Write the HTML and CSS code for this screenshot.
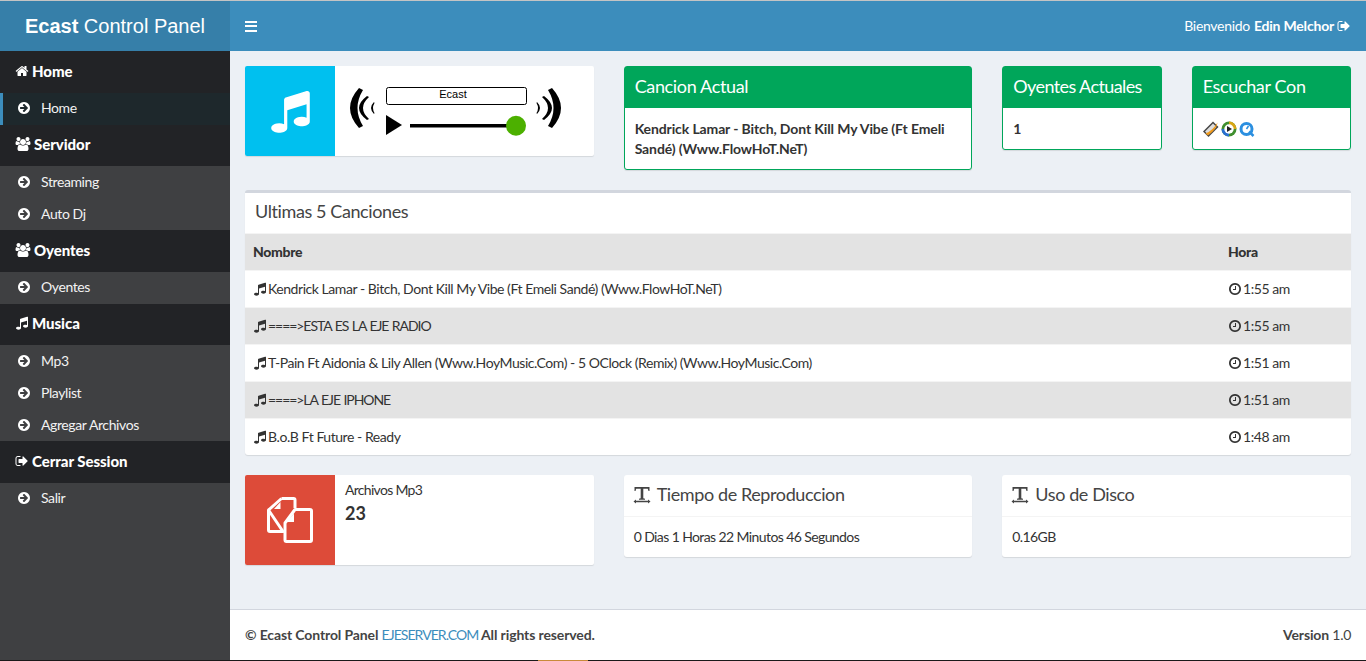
FILE: index.html
```html
<!DOCTYPE html>
<html lang="es">
<head>
    <meta charset="UTF-8">
    <meta name="viewport" content="width=device-width, initial-scale=1.0">
    <title>Ecast Control Panel</title>
    <link rel="stylesheet" href="styles.css">
</head>
<body>
    <!-- iconos -->
    <svg class="sprite" xmlns="http://www.w3.org/2000/svg">
        <symbol id="i-music" viewBox="0 0 1792 1792"><path d="M1664 176v1120q0 50-34 89t-86 60.5-103.5 32-96.5 10.5-96.5-10.5-103.5-32-86-60.5-34-89 34-89 86-60.5 103.5-32 96.5-10.5q105 0 192 39v-537l-768 237v709q0 50-34 89t-86 60.5-103.5 32-96.5 10.5-96.5-10.5-103.5-32-86-60.5-34-89 34-89 86-60.5 103.5-32 96.5-10.5q105 0 192 39v-967q0-31 19-56.5t49-35.5l832-256q12-4 28-4 40 0 68 28t28 68z"/></symbol>
        <symbol id="i-arrow" viewBox="0 0 1792 1792"><path d="M1285 896q0-27-18-45l-91-91-362-362q-18-18-45-18t-45 18l-91 91q-18 18-18 45t18 45l189 189h-502q-26 0-45 19t-19 45v128q0 26 19 45t45 19h502l-189 189q-19 19-19 45t19 45l91 91q18 18 45 18t45-18l362-362 91-91q18-18 18-45zm251 0q0 209-103 385.5t-279.5 279.5-385.5 103-385.5-103-279.5-279.5-103-385.5 103-385.5 279.5-279.5 385.5-103 385.5 103 279.5 279.5 103 385.5z"/></symbol>
        <symbol id="i-signout" viewBox="0 0 1792 1792"><path d="M704 1440q0 4 1 20t.5 26.5-3 23.5-10 19.5-20.5 6.5h-320q-119 0-203.5-84.5t-84.5-203.5v-704q0-119 84.5-203.5t203.5-84.5h320q13 0 22.5 9.5t9.5 22.5q0 4 1 20t.5 26.5-3 23.5-10 19.5-20.5 6.5h-320q-66 0-113 47t-47 113v704q0 66 47 113t113 47h312l11.5 1 11.5 3 8 5.5 7 9 2 13.5zm928-544q0 26-19 45l-544 544q-19 19-45 19t-45-19-19-45v-288h-448q-26 0-45-19t-19-45v-384q0-26 19-45t45-19h448v-288q0-26 19-45t45-19 45 19l544 544q19 19 19 45z"/></symbol>
        <symbol id="i-home" viewBox="0 0 1792 1792"><path d="M1472 992v480q0 26-19 45t-45 19h-384v-384h-256v384h-384q-26 0-45-19t-19-45v-480q0-1 .5-3t.5-3l575-474 575 474q1 2 1 6zm223-69l-62 74q-8 9-21 11h-3q-13 0-21-7l-692-577-692 577q-12 8-24 7-13-2-21-11l-62-74q-8-10-7-23.5t11-21.5l719-599q32-26 76-26t76 26l244 204v-195q0-14 9-23t23-9h192q14 0 23 9t9 23v408l219 182q10 8 11 21.5t-7 23.5z"/></symbol>
        <symbol id="i-users" viewBox="0 0 1920 1792"><path d="M593 896q-162 5-265 128h-134q-82 0-138-40.5t-56-118.5q0-353 124-353 6 0 43.5 21t97.5 42.5 119 21.5q67 0 133-23-5 37-5 66 0 139 81 256zm1071 637q0 120-73 189.5t-194 69.5h-874q-121 0-194-69.5t-73-189.5q0-53 3.5-103.5t14-109 26.5-108.5 43-97.5 62-81 85.5-53.5 111.5-20q10 0 43 21.5t73 48 107 48 135 21.5 135-21.5 107-48 73-48 43-21.5q61 0 111.5 20t85.5 53.5 62 81 43 97.5 26.5 108.5 14 109 3.5 103.5zm-1024-1277q0 106-75 181t-181 75-181-75-75-181 75-181 181-75 181 75 75 181zm704 384q0 159-112.5 271.5t-271.5 112.5-271.5-112.5-112.5-271.5 112.5-271.5 271.5-112.5 271.5 112.5 112.5 271.5zm576 225q0 78-56 118.5t-138 40.5h-134q-103-123-265-128 81-117 81-256 0-29-5-66 66 23 133 23 59 0 119-21.5t97.5-42.5 43.5-21q124 0 124 353zm-128-609q0 106-75 181t-181 75-181-75-75-181 75-181 181-75 181 75 75 181z"/></symbol>
        <symbol id="i-clock" viewBox="0 0 1792 1792"><path d="M1024 544v448q0 14-9 23t-23 9h-320q-14 0-23-9t-9-23v-64q0-14 9-23t23-9h224v-352q0-14 9-23t23-9h64q14 0 23 9t9 23zm416 352q0-148-73-273t-198-198-273-73-273 73-198 198-73 273 73 273 198 198 273 73 273-73 198-198 73-273zm224 0q0 209-103 385.5t-279.5 279.5-385.5 103-385.5-103-279.5-279.5-103-385.5 103-385.5 279.5-279.5 385.5-103 385.5 103 279.5 279.5 103 385.5z"/></symbol>
        <symbol id="i-textwidth" viewBox="0 0 18 18"><path d="M1.500 1h15v4h-1l-.7-2.300H10.300V12.200l1.700.6v.9H6v-.9l1.700-.6V2.700H3.200L2.500 5h-1zM.5 15.500l2.500-1.900v1.200h12v-1.200l2.500 1.900L15 17.400v-1.200H3v1.200z"/></symbol>
        <symbol id="i-waves" viewBox="0 0 26 44"><path d="M9 2Q-9 22 9 42L13 40Q2 22 13 4zM17 10Q1 22 17 34L19 33Q7 22 19 11zM24 16Q18 22 24 28L24.500 27Q21.500 22 24.500 17z"/></symbol>
    </svg>

    <div class="layout">
        <aside class="sidebar">
            <div class="logo"><b>Ecast</b> Control Panel</div>
            <nav>
                <div class="nav-title"><svg class="ico"><use href="#i-home"/></svg>Home</div>
                <a class="nav-item active"><svg class="ico-arrow"><use href="#i-arrow"/></svg>Home</a>
                <div class="nav-title"><svg class="ico ico-wide"><use href="#i-users"/></svg>Servidor</div>
                <a class="nav-item"><svg class="ico-arrow"><use href="#i-arrow"/></svg>Streaming</a>
                <a class="nav-item"><svg class="ico-arrow"><use href="#i-arrow"/></svg>Auto Dj</a>
                <div class="nav-title"><svg class="ico ico-wide"><use href="#i-users"/></svg>Oyentes</div>
                <a class="nav-item"><svg class="ico-arrow"><use href="#i-arrow"/></svg>Oyentes</a>
                <div class="nav-title"><svg class="ico"><use href="#i-music"/></svg>Musica</div>
                <a class="nav-item"><svg class="ico-arrow"><use href="#i-arrow"/></svg>Mp3</a>
                <a class="nav-item"><svg class="ico-arrow"><use href="#i-arrow"/></svg>Playlist</a>
                <a class="nav-item"><svg class="ico-arrow"><use href="#i-arrow"/></svg>Agregar Archivos</a>
                <div class="nav-title"><svg class="ico"><use href="#i-signout"/></svg>Cerrar Session</div>
                <a class="nav-item"><svg class="ico-arrow"><use href="#i-arrow"/></svg>Salir</a>
            </nav>
        </aside>

        <div class="page">
            <header class="topbar">
                <div class="burger"><span></span><span></span><span></span></div>
                <div class="welcome">Bienvenido <b>Edin Melchor</b><svg class="ico-out"><use href="#i-signout"/></svg></div>
            </header>

            <main class="content">
                <section class="grid">
                    <div class="info-box">
                        <div class="info-icon bg-blue"><svg class="icon-big"><use href="#i-music"/></svg></div>
                        <div class="player">
                            <svg viewBox="0 0 220 50">
                                <use href="#i-waves" width="26" height="44"/>
                                <use href="#i-waves" width="26" height="44" transform="translate(211 0) scale(-1 1)"/>
                                <rect x="36.500" y="1.500" width="140" height="17" rx="2" fill="#fff" stroke="#000"/>
                                <text x="103" y="12" class="player-name">Ecast</text>
                                <path d="M36 29l16 10-16 10z"/>
                                <rect x="60" y="38" width="104" height="3.500"/>
                                <circle cx="166" cy="39.700" r="10" fill="#4cb000"/>
                            </svg>
                        </div>
                    </div>
                    <div class="card">
                        <h3 class="card-title">Cancion Actual</h3>
                        <div class="card-body"><b>Kendrick Lamar - Bitch, Dont Kill My Vibe (Ft Emeli Sandé) (Www.FlowHoT.NeT)</b></div>
                    </div>
                    <div class="grid-two">
                        <div class="card">
                            <h3 class="card-title card-title-tight">Oyentes Actuales</h3>
                            <div class="card-body"><b>1</b></div>
                        </div>
                        <div class="card">
                            <h3 class="card-title">Escuchar Con</h3>
                            <div class="card-body players">
                                <!-- winamp -->
                                <svg width="16" height="16" viewBox="0 0 16 16"><path d="M0 10.500L10 .5l5.500 5.500-10 10z" fill="#444"/><path d="M2 10.500L10 2.500l3.500 3.500L5.500 14z" fill="#ddd"/><path d="M2.500 12.500Q10 9.500 14.500 1.500Q14 8 5 14.500z" fill="#f09a1a"/></svg>
                                <!-- windows media -->
                                <svg width="16" height="16" viewBox="0 0 16 16"><circle cx="8" cy="8" r="7.500" fill="#3f8f2f"/><path d="M8 .5A7.500 7.500 0 0 1 15.500 8H8z" fill="#d9a514"/><path d="M8 15.500A7.500 7.500 0 0 1 .5 8H8z" fill="#2a6fd0"/><circle cx="8" cy="8" r="4.700" fill="#fff"/><path d="M6 5l5 3-5 3z" fill="#222"/></svg>
                                <!-- quicktime -->
                                <svg width="16" height="16" viewBox="0 0 16 16"><circle cx="7.500" cy="8" r="5.500" fill="#fff" stroke="#2b8fe0" stroke-width="3"/><path d="M10 10.500L14.500 15" stroke="#2b8fe0" stroke-width="2.500"/><path d="M7.500 8l2-3" stroke="#2b8fe0" stroke-width="1.500"/></svg>
                            </div>
                        </div>
                    </div>
                </section>

                <section class="box">
                    <h3 class="box-title">Ultimas 5 Canciones</h3>
                    <table class="songs">
                        <thead>
                            <tr><th>Nombre</th><th class="col-time">Hora</th></tr>
                        </thead>
                        <tbody>
                            <tr>
                                <td><svg class="ico-sm"><use href="#i-music"/></svg>Kendrick Lamar - Bitch, Dont Kill My Vibe (Ft Emeli Sandé) (Www.FlowHoT.NeT)</td>
                                <td><svg class="ico-sm"><use href="#i-clock"/></svg>1:55 am</td>
                            </tr>
                            <tr>
                                <td class="caps"><svg class="ico-sm"><use href="#i-music"/></svg>====&gt;ESTA ES LA EJE RADIO</td>
                                <td><svg class="ico-sm"><use href="#i-clock"/></svg>1:55 am</td>
                            </tr>
                            <tr>
                                <td><svg class="ico-sm"><use href="#i-music"/></svg>T-Pain Ft Aidonia &amp; Lily Allen (Www.HoyMusic.Com) - 5 OClock (Remix) (Www.HoyMusic.Com)</td>
                                <td><svg class="ico-sm"><use href="#i-clock"/></svg>1:51 am</td>
                            </tr>
                            <tr>
                                <td class="caps"><svg class="ico-sm"><use href="#i-music"/></svg>====&gt;LA EJE IPHONE</td>
                                <td><svg class="ico-sm"><use href="#i-clock"/></svg>1:51 am</td>
                            </tr>
                            <tr>
                                <td><svg class="ico-sm"><use href="#i-music"/></svg>B.o.B Ft Future - Ready</td>
                                <td><svg class="ico-sm"><use href="#i-clock"/></svg>1:48 am</td>
                            </tr>
                        </tbody>
                    </table>
                </section>

                <section class="grid">
                    <div class="info-box">
                        <div class="info-icon bg-red">
                            <svg class="icon-files" viewBox="0 0 46 46" fill="none" stroke="#fff" stroke-width="3" stroke-linejoin="round">
                                <path d="M14.500 1.500H26.500q1.500 0 1.500 1.500V11M16 34.500H3q-1.500 0-1.500-1.500V13z"/>
                                <path d="M1.500 13L14.500 1.500"/>
                                <path d="M28 12.500h15q1.500 0 1.500 1.500V43q0 1.500-1.500 1.500H19.500q-1.500 0-1.500-1.500V26z"/>
                                <path d="M13.500 5v7H7zM27 16.500V25H19.500z" fill="#fff" stroke="none"/>
                            </svg>
                        </div>
                        <div class="info-text">
                            <span>Archivos Mp3</span>
                            <b class="info-num">23</b>
                        </div>
                    </div>
                    <div class="box box-plain">
                        <h3 class="box-title box-title-line"><svg class="ico-title"><use href="#i-textwidth"/></svg>Tiempo de Reproduccion</h3>
                        <div class="box-text">0 Dias 1 Horas 22 Minutos 46 Segundos</div>
                    </div>
                    <div class="box box-plain">
                        <h3 class="box-title box-title-line"><svg class="ico-title"><use href="#i-textwidth"/></svg>Uso de Disco</h3>
                        <div class="box-text">0.16GB</div>
                    </div>
                </section>
            </main>

            <footer class="footer">
                <div><b>© Ecast Control Panel <a class="link">EJESERVER.COM</a> All rights reserved.</b></div>
                <div><b>Version</b> 1.0</div>
            </footer>
        </div>
    </div>
    <div class="taskbar"></div>
</body>
</html>
```

FILE: styles.css
```css
:root {
    --blue: #3c8dbc;
    --blue-dark: #367fa9;
    --green: #00a65a;
    --bg: #ecf0f5;
    --text: #333;
    --side-dark: #222326;
    --side-light: #3f4042;
}

* {
    box-sizing: border-box;
}

html, body {
    margin: 0;
    height: 100%;
}

body {
    font-family: "Lato", "Liberation Sans", sans-serif;
    font-size: 14px;
    line-height: 20px;
    letter-spacing: -0.3px;
    color: var(--text);
    background-color: var(--bg);
    border-top: 1px solid #c4c4c4;
    display: flex;
    flex-direction: column;
    overflow: hidden;
}

b {
    letter-spacing: -0.12px;
}

.sprite {
    display: none;
}

.layout {
    flex: 1;
    display: flex;
    min-height: 0;
}

/* Sidebar */
.sidebar {
    width: 230px;
    flex: none;
    background-color: var(--side-light);
    color: #fff;
}

.logo {
    height: 50px;
    line-height: 50px;
    text-align: center;
    background-color: var(--blue-dark);
    font-family: "Liberation Sans", Arial, sans-serif;
    font-size: 20px;
    letter-spacing: 0;
}

.logo b {
    letter-spacing: 0;
}

.nav-title {
    height: 41.5px;
    display: flex;
    align-items: center;
    padding: 0 0 2px 15px;
    background-color: var(--side-dark);
    font-size: 15px;
    font-weight: 900;
    letter-spacing: -0.05px;
}

.nav-item {
    height: 32px;
    display: flex;
    align-items: center;
    padding: 0 0 0.5px 18px;
    color: #f2f2f2;
    letter-spacing: -0.4px;
}

.nav-item.active {
    background-color: #1e282c;
    border-left: 3px solid var(--blue);
    padding-left: 15px;
}

.ico {
    width: 14px;
    height: 14px;
    fill: #fff;
    margin-right: 3px;
}

.ico-wide {
    width: 16px;
    margin-right: 3px;
}

.ico-arrow {
    width: 14px;
    height: 14px;
    fill: #fff;
    margin-right: 9px;
}

/* Barra superior */
.page {
    flex: 1;
    min-width: 0;
    display: flex;
    flex-direction: column;
}

.topbar {
    height: 50px;
    flex: none;
    background-color: var(--blue);
    color: #fff;
    display: flex;
    align-items: center;
    justify-content: space-between;
    padding: 0 15px;
}

.burger {
    width: 12px;
    display: flex;
    flex-direction: column;
    gap: 2.500px;
}

.burger span {
    height: 2px;
    background-color: #fff;
}

.welcome {
    display: flex;
    align-items: center;
    gap: 3px;
}

.welcome b {
    margin-left: 1px;
    letter-spacing: -0.2px;
}

.ico-out {
    width: 14px;
    height: 14px;
    fill: #fff;
}

/* Contenido */
.content {
    flex: 1;
    padding: 15px;
    display: flex;
    flex-direction: column;
    gap: 20px;
}

.grid {
    display: grid;
    grid-template-columns: repeat(3, 1fr);
    column-gap: 30px;
    align-items: start;
}

.grid-two {
    display: grid;
    grid-template-columns: repeat(2, 1fr);
    column-gap: 30px;
    align-items: start;
}

.info-box {
    display: flex;
    height: 90px;
    background-color: #fff;
    border-radius: 2px;
    box-shadow: 0 1px 1px rgba(0, 0, 0, 0.1);
}

.info-icon {
    width: 90px;
    flex: none;
    display: flex;
    align-items: center;
    justify-content: center;
    border-radius: 2px 0 0 2px;
}

.bg-blue {
    background-color: #00c0ef;
}

.bg-red {
    background-color: #dd4b39;
}

.icon-big {
    width: 45px;
    height: 45px;
    fill: #fff;
}

.icon-files {
    width: 46px;
    height: 46px;
}

.player {
    padding: 20px 0 0 15px;
}

.player svg {
    display: block;
    width: 220px;
    height: 50px;
}

.player-name {
    font-family: "Liberation Sans", Arial, sans-serif;
    font-size: 11px;
    letter-spacing: 0;
    text-anchor: middle;
}

.info-text {
    padding: 5px 10px;
    display: flex;
    flex-direction: column;
    letter-spacing: -0.7px;
}

.info-num {
    font-size: 18px;
    line-height: 26px;
    letter-spacing: 0;
}

.card {
    background-color: #fff;
    border: 1px solid var(--green);
    border-radius: 3px;
    box-shadow: 0 1px 1px rgba(0, 0, 0, 0.1);
}

.card-title {
    margin: 0;
    padding: 9px 10px 0;
    height: 41px;
    background-color: var(--green);
    color: #fff;
    font-size: 18px;
    font-weight: 400;
    letter-spacing: -0.35px;
}

.card-title-tight {
    letter-spacing: -0.6px;
}

.card-body {
    padding: 11px 10px 10px;
}

.players {
    display: flex;
    gap: 2px;
    min-height: 41px;
    padding-top: 13px;
}

.box {
    background-color: #fff;
    border-top: 3px solid #d2d6de;
    border-radius: 3px;
    box-shadow: 0 1px 1px rgba(0, 0, 0, 0.1);
}

.box-plain {
    border-top: 0;
}

.box-title {
    margin: 0;
    padding: 8px 10px 12px;
    font-size: 18px;
    font-weight: 400;
    color: #444;
    letter-spacing: -0.4px;
}

.box-title-line {
    display: flex;
    align-items: flex-start;
    height: 42px;
    padding: 9px 10px 0;
    border-bottom: 1px solid #f4f4f4;
}

.ico-title {
    width: 18px;
    height: 18px;
    fill: #444;
    margin: 2px 6px 0 -1px;
}

.box-text {
    padding: 10px;
    letter-spacing: -0.6px;
}

.songs {
    width: 100%;
    border-collapse: collapse;
    letter-spacing: -0.45px;
}

.songs th, .songs td {
    padding: 8px;
    text-align: left;
    border-top: 1px solid #f4f4f4;
}

.songs th {
    font-weight: 900;
    letter-spacing: -0.3px;
}

.songs .caps {
    letter-spacing: -1.05px;
    word-spacing: 1px;
}

.songs thead tr, .songs tbody tr:nth-child(even) {
    background-color: #e3e3e3;
}

.col-time {
    width: 131px;
}

.ico-sm {
    width: 14px;
    height: 14px;
    fill: #333;
    margin-right: 1px;
    vertical-align: -2px;
}

/* Pie */
.footer {
    height: 51px;
    flex: none;
    background-color: #fff;
    border-top: 1px solid #d2d6de;
    padding: 0 15px;
    display: flex;
    align-items: center;
    justify-content: space-between;
    color: #444;
}

.link {
    color: var(--blue);
    font-weight: 400;
    letter-spacing: -0.95px;
}

.taskbar {
    height: 1px;
    flex: none;
    background: linear-gradient(90deg, #1a1a1a 538px, #c98a3a 538px, #c98a3a 588px, #1a1a1a 588px);
}
```
